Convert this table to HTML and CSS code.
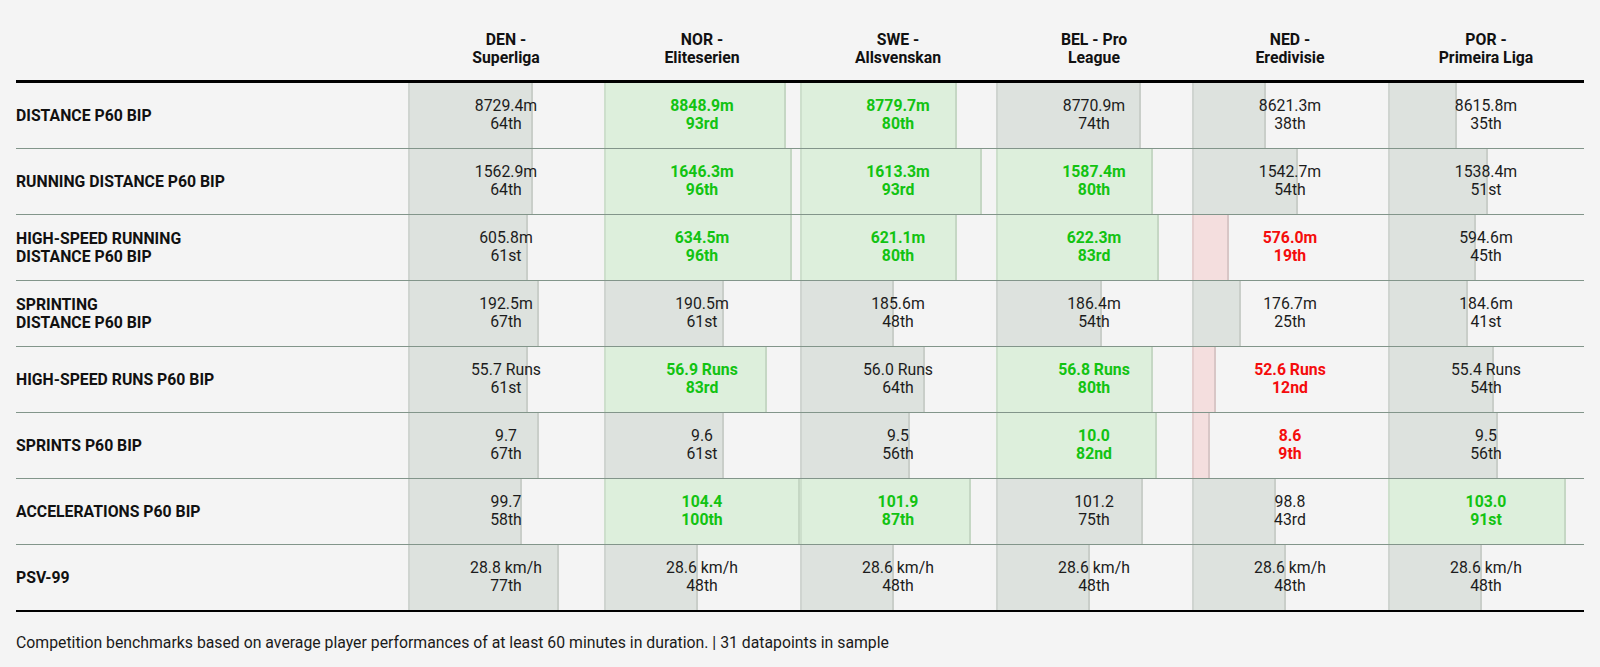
FILE: index.html
```html
<!DOCTYPE html>
<html lang="en">
<head>
<meta charset="utf-8">
<title>Competition benchmarks</title>
<link rel="stylesheet" href="styles.css">
</head>
<body>
<div class="table">
  <div class="row head">
    <div class="label"></div>
    <div class="hcell">DEN -<br>Superliga</div>
    <div class="hcell">NOR -<br>Eliteserien</div>
    <div class="hcell">SWE -<br>Allsvenskan</div>
    <div class="hcell">BEL - Pro<br>League</div>
    <div class="hcell">NED -<br>Eredivisie</div>
    <div class="hcell">POR -<br>Primeira Liga</div>
  </div>

  <div class="row">
    <div class="label">DISTANCE P60 BIP</div>
    <div class="cell"><div class="bar" style="width:64%"></div><div class="val">8729.4m<br>64th</div></div>
    <div class="cell good"><div class="bar" style="width:93%"></div><div class="val">8848.9m<br>93rd</div></div>
    <div class="cell good"><div class="bar" style="width:80%"></div><div class="val">8779.7m<br>80th</div></div>
    <div class="cell"><div class="bar" style="width:74%"></div><div class="val">8770.9m<br>74th</div></div>
    <div class="cell"><div class="bar" style="width:38%"></div><div class="val">8621.3m<br>38th</div></div>
    <div class="cell"><div class="bar" style="width:35%"></div><div class="val">8615.8m<br>35th</div></div>
  </div>

  <div class="row">
    <div class="label">RUNNING DISTANCE P60 BIP</div>
    <div class="cell"><div class="bar" style="width:64%"></div><div class="val">1562.9m<br>64th</div></div>
    <div class="cell good"><div class="bar" style="width:96%"></div><div class="val">1646.3m<br>96th</div></div>
    <div class="cell good"><div class="bar" style="width:93%"></div><div class="val">1613.3m<br>93rd</div></div>
    <div class="cell good"><div class="bar" style="width:80%"></div><div class="val">1587.4m<br>80th</div></div>
    <div class="cell"><div class="bar" style="width:54%"></div><div class="val">1542.7m<br>54th</div></div>
    <div class="cell"><div class="bar" style="width:51%"></div><div class="val">1538.4m<br>51st</div></div>
  </div>

  <div class="row">
    <div class="label">HIGH-SPEED RUNNING<br>DISTANCE P60 BIP</div>
    <div class="cell"><div class="bar" style="width:61%"></div><div class="val">605.8m<br>61st</div></div>
    <div class="cell good"><div class="bar" style="width:96%"></div><div class="val">634.5m<br>96th</div></div>
    <div class="cell good"><div class="bar" style="width:80%"></div><div class="val">621.1m<br>80th</div></div>
    <div class="cell good"><div class="bar" style="width:83%"></div><div class="val">622.3m<br>83rd</div></div>
    <div class="cell bad"><div class="bar" style="width:19%"></div><div class="val">576.0m<br>19th</div></div>
    <div class="cell"><div class="bar" style="width:45%"></div><div class="val">594.6m<br>45th</div></div>
  </div>

  <div class="row">
    <div class="label">SPRINTING<br>DISTANCE P60 BIP</div>
    <div class="cell"><div class="bar" style="width:67%"></div><div class="val">192.5m<br>67th</div></div>
    <div class="cell"><div class="bar" style="width:61%"></div><div class="val">190.5m<br>61st</div></div>
    <div class="cell"><div class="bar" style="width:48%"></div><div class="val">185.6m<br>48th</div></div>
    <div class="cell"><div class="bar" style="width:54%"></div><div class="val">186.4m<br>54th</div></div>
    <div class="cell"><div class="bar" style="width:25%"></div><div class="val">176.7m<br>25th</div></div>
    <div class="cell"><div class="bar" style="width:41%"></div><div class="val">184.6m<br>41st</div></div>
  </div>

  <div class="row">
    <div class="label">HIGH-SPEED RUNS P60 BIP</div>
    <div class="cell"><div class="bar" style="width:61%"></div><div class="val">55.7 Runs<br>61st</div></div>
    <div class="cell good"><div class="bar" style="width:83%"></div><div class="val">56.9 Runs<br>83rd</div></div>
    <div class="cell"><div class="bar" style="width:64%"></div><div class="val">56.0 Runs<br>64th</div></div>
    <div class="cell good"><div class="bar" style="width:80%"></div><div class="val">56.8 Runs<br>80th</div></div>
    <div class="cell bad"><div class="bar" style="width:12%"></div><div class="val">52.6 Runs<br>12nd</div></div>
    <div class="cell"><div class="bar" style="width:54%"></div><div class="val">55.4 Runs<br>54th</div></div>
  </div>

  <div class="row">
    <div class="label">SPRINTS P60 BIP</div>
    <div class="cell"><div class="bar" style="width:67%"></div><div class="val">9.7<br>67th</div></div>
    <div class="cell"><div class="bar" style="width:61%"></div><div class="val">9.6<br>61st</div></div>
    <div class="cell"><div class="bar" style="width:56%"></div><div class="val">9.5<br>56th</div></div>
    <div class="cell good"><div class="bar" style="width:82%"></div><div class="val">10.0<br>82nd</div></div>
    <div class="cell bad"><div class="bar" style="width:9%"></div><div class="val">8.6<br>9th</div></div>
    <div class="cell"><div class="bar" style="width:56%"></div><div class="val">9.5<br>56th</div></div>
  </div>

  <div class="row">
    <div class="label">ACCELERATIONS P60 BIP</div>
    <div class="cell"><div class="bar" style="width:58%"></div><div class="val">99.7<br>58th</div></div>
    <div class="cell good"><div class="bar" style="width:100%"></div><div class="val">104.4<br>100th</div></div>
    <div class="cell good"><div class="bar" style="width:87%"></div><div class="val">101.9<br>87th</div></div>
    <div class="cell"><div class="bar" style="width:75%"></div><div class="val">101.2<br>75th</div></div>
    <div class="cell"><div class="bar" style="width:43%"></div><div class="val">98.8<br>43rd</div></div>
    <div class="cell good"><div class="bar" style="width:91%"></div><div class="val">103.0<br>91st</div></div>
  </div>

  <div class="row last">
    <div class="label">PSV-99</div>
    <div class="cell"><div class="bar" style="width:77%"></div><div class="val">28.8 km/h<br>77th</div></div>
    <div class="cell"><div class="bar" style="width:48%"></div><div class="val">28.6 km/h<br>48th</div></div>
    <div class="cell"><div class="bar" style="width:48%"></div><div class="val">28.6 km/h<br>48th</div></div>
    <div class="cell"><div class="bar" style="width:48%"></div><div class="val">28.6 km/h<br>48th</div></div>
    <div class="cell"><div class="bar" style="width:48%"></div><div class="val">28.6 km/h<br>48th</div></div>
    <div class="cell"><div class="bar" style="width:48%"></div><div class="val">28.6 km/h<br>48th</div></div>
  </div>
</div>
<p class="note">Competition benchmarks based on average player performances of at least 60 minutes in duration. | 31 datapoints in sample</p>
</body>
</html>
```

FILE: styles.css
```css
html, body {
  margin: 0;
  padding: 0;
  background: #f4f4f4;
}

body {
  padding: 0 16px;
  font-family: Roboto, "Liberation Sans", Arial, sans-serif;
  font-size: 15.8px;
  line-height: 18px;
  color: #1a1a1a;
}

.table {
  width: 1568px;
}

.row {
  display: grid;
  grid-template-columns: 392px repeat(6, 196px);
  height: 66px;
  box-sizing: border-box;
  border-bottom: 1px solid #82958a;
}

.row.head {
  height: 83px;
  border-bottom: 3px solid #000;
}

.row.last {
  height: 67px;
  border-bottom: 2px solid #000;
}

.label {
  align-self: center;
  font-weight: 700;
  color: #111;
}

.hcell {
  align-self: end;
  text-align: center;
  font-weight: 700;
  color: #111;
  padding-bottom: 13px;
}

.cell {
  display: grid;
  height: 100%;
}

.cell > .bar,
.cell > .val {
  grid-area: 1 / 1;
}

.bar {
  justify-self: start;
  height: 100%;
  box-sizing: border-box;
  background: #dde2de;
  border-left: 2px solid #cfd4d0;
  border-right: 2px solid #c9cec9;
}

.val {
  align-self: center;
  justify-self: center;
  text-align: center;
  color: #1c1c1c;
  padding-bottom: 1px;
}

.good .bar {
  background: #ddefdc;
  border-left-color: #cddfcc;
  border-right-color: #c5d7c4;
}

.good .val {
  color: #12c312;
  font-weight: 700;
}

.bad .bar {
  background: #f4dede;
  border-left-color: #e4cece;
  border-right-color: #d8c6c6;
}

.bad .val {
  color: #f40c0c;
  font-weight: 700;
}

.note {
  margin: 22px 0 0;
  color: #1a1a1a;
}
```
